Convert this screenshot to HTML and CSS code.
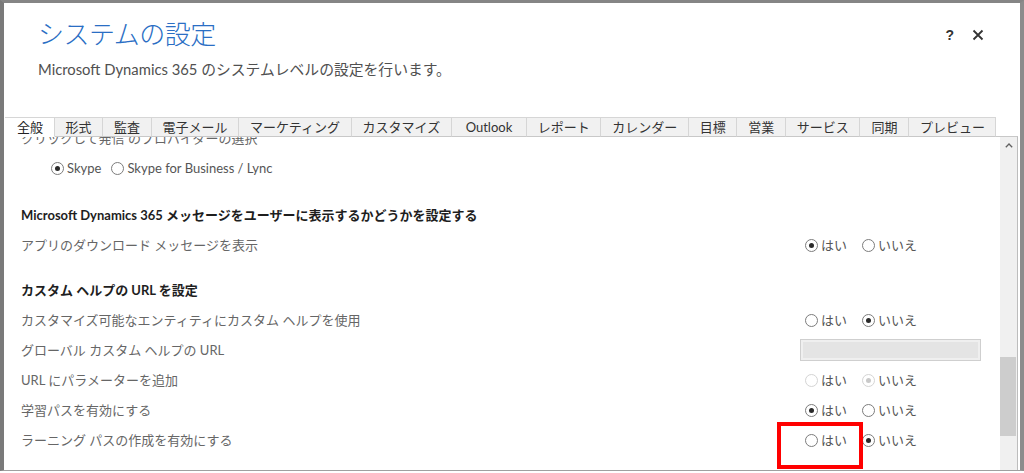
FILE: index.html
```html
<!DOCTYPE html>
<html lang="ja">
<head>
<meta charset="utf-8">
<title>システムの設定</title>
<link rel="stylesheet" href="styles.css">
</head>
<body>
<div class="frame">
  <header class="head">
    <div class="titles">
      <h1 class="title">システムの設定</h1>
      <p class="sub">Microsoft Dynamics 365 のシステムレベルの設定を行います。</p>
    </div>
    <div class="head-actions">
      <span class="help">?</span>
      <svg class="close" viewBox="0 0 12 12" width="12" height="12"><path d="M1.5 1.5 L10.5 10.5 M10.5 1.5 L1.5 10.5" stroke="#333" stroke-width="1.8" fill="none"/></svg>
    </div>
  </header>
  <nav class="tabs">
    <span class="tab active">全般</span>
    <span class="tab">形式</span>
    <span class="tab">監査</span>
    <span class="tab">電子メール</span>
    <span class="tab">マーケティング</span>
    <span class="tab">カスタマイズ</span>
    <span class="tab latin">Outlook</span>
    <span class="tab">レポート</span>
    <span class="tab">カレンダー</span>
    <span class="tab">目標</span>
    <span class="tab">営業</span>
    <span class="tab">サービス</span>
    <span class="tab">同期</span>
    <span class="tab">プレビュー</span>
  </nav>
  <div class="pane">
    <div class="scroll">
      <div class="content">
        <div class="line partial">クリックして発信 のプロバイダーの選択</div>
        <div class="line skype">
          <span class="opt"><span class="radio checked"></span>Skype</span>
          <span class="opt"><span class="radio"></span>Skype for Business / Lync</span>
        </div>
        <section class="sec sec1">
          <div class="line heading">Microsoft Dynamics 365 メッセージをユーザーに表示するかどうかを設定する</div>
          <div class="line row">
            <span class="label">アプリのダウンロード メッセージを表示</span>
            <span class="ctrl"><span class="opt"><span class="radio checked"></span>はい</span><span class="opt"><span class="radio"></span>いいえ</span></span>
          </div>
        </section>
        <section class="sec sec2">
          <div class="line heading">カスタム ヘルプの URL を設定</div>
          <div class="line row">
            <span class="label">カスタマイズ可能なエンティティにカスタム ヘルプを使用</span>
            <span class="ctrl"><span class="opt"><span class="radio"></span>はい</span><span class="opt"><span class="radio checked"></span>いいえ</span></span>
          </div>
          <div class="line row">
            <span class="label">グローバル カスタム ヘルプの URL</span>
            <span class="ctrl"><span class="input"></span></span>
          </div>
          <div class="line row">
            <span class="label">URL にパラメーターを追加</span>
            <span class="ctrl"><span class="opt"><span class="radio disabled"></span>はい</span><span class="opt"><span class="radio disabled checked"></span>いいえ</span></span>
          </div>
          <div class="line row">
            <span class="label">学習パスを有効にする</span>
            <span class="ctrl"><span class="opt"><span class="radio checked"></span>はい</span><span class="opt"><span class="radio"></span>いいえ</span></span>
          </div>
          <div class="line row">
            <span class="label">ラーニング パスの作成を有効にする</span>
            <span class="ctrl"><span class="opt"><span class="radio"></span>はい</span><span class="opt"><span class="radio checked"></span>いいえ</span><span class="highlight"></span></span>
          </div>
        </section>
      </div>
    </div>
    <div class="scrollbar">
      <div class="arrow"><svg viewBox="0 0 8 5" width="8" height="5"><path d="M0.8 4.2 L4 1 L7.2 4.2" stroke="#606060" stroke-width="1.3" fill="none"/></svg></div>
      <div class="thumb"></div>
    </div>
  </div>
</div>
</body>
</html>
```
FILE: styles.css
```css
html, body {
  margin: 0;
  padding: 0;
  background: #ffffff;
}
body {
  font-family: "Lato", "Noto Sans CJK JP", sans-serif;
  width: 1024px;
  height: 473px;
  overflow: hidden;
}
.frame {
  box-sizing: border-box;
  height: 471px;
  border-top: 3px solid #858585;
  border-left: 4px solid #7a7a7a;
  border-right: 4px solid #8c8c8c;
  border-bottom: 1px solid #a0a0a0;
  display: flex;
  flex-direction: column;
  background: #fff;
}
.head {
  height: 114px;
  display: flex;
  justify-content: space-between;
  align-items: flex-start;
  padding: 0 36px 0 34px;
  box-sizing: border-box;
}
.title {
  margin: 14px 0 0 0;
  font-size: 26px;
  line-height: 34px;
  font-weight: 300;
  color: #2a6ec4;
  letter-spacing: -0.5px;
}
.sub {
  margin: 8px 0 0 0;
  font-size: 14.8px;
  line-height: 20px;
  color: #505050;
}
.head-actions {
  display: flex;
  align-items: center;
  gap: 18px;
  margin-top: 25px;
  height: 14px;
}
.help {
  font-family: "Liberation Sans", sans-serif;
  font-weight: bold;
  font-size: 14px;
  color: #333;
}
.close {
  display: block;
}
.tabs {
  display: flex;
  margin-left: 1px;
  height: 20px;
  margin-bottom: -1px;
  position: relative;
  z-index: 1;
}
.tab {
  box-sizing: border-box;
  height: 20px;
  padding: 0 10.5px 0 11px;
  font-size: 13px;
  line-height: 19px;
  color: #333;
  background: #f1f1f1;
  border: 1px solid #d6d6d6;
  border-left: none;
  border-bottom: 1px solid #c8c8c8;
  white-space: nowrap;
}
.tab.latin {
  padding: 0 13.5px 0 14px;
}
.tab.active {
  background: #fff;
  padding-left: 12px;
  border-bottom-color: #fff;
  color: #222;
}
.pane {
  flex: 1;
  display: flex;
  margin-left: 1px;
  margin-right: 2px;
  border-top: 1px solid #c8c8c8;
  border-right: 1px solid #bdbdbd;
  overflow: hidden;
}
.scroll {
  flex: 1;
  overflow: hidden;
}
.content {
  padding-left: 16px;
  font-size: 13px;
  color: #666;
}
.line {
  height: 30px;
  line-height: 30px;
  white-space: nowrap;
}
.partial {
  margin-top: -14px;
  color: #666;
}
.skype {
  padding-left: 30px;
  display: flex;
  gap: 10px;
  color: #555;
}
.sec1 { margin-top: 17px; }
.sec2 { margin-top: 15px; }
.heading {
  font-weight: bold;
  color: #1e1e1e;
}
.row {
  display: grid;
  grid-template-columns: 779px auto;
}
.ctrl {
  display: flex;
  align-items: center;
  position: relative;
  color: #555;
}
.opt {
  display: inline-flex;
  align-items: center;
  height: 30px;
}
.ctrl .opt:first-child {
  margin-left: 5px;
  width: 57px;
}
.radio {
  box-sizing: border-box;
  width: 13px;
  height: 13px;
  border: 1px solid #7c7c7c;
  border-radius: 50%;
  background: #fff;
  margin-right: 3px;
  display: inline-flex;
  align-items: center;
  justify-content: center;
}
.radio.checked::after {
  content: "";
  width: 5px;
  height: 5px;
  border-radius: 50%;
  background: #2a2a2a;
}
.radio.disabled {
  border-color: #d4d4d4;
}
.radio.disabled.checked::after {
  background: #c9c9c9;
}
.input {
  box-sizing: border-box;
  width: 181px;
  height: 22px;
  background: #e4e4e4;
  border: 1px solid #cfcfcf;
  box-shadow: inset 0 0 0 2px #efefef;
}
.highlight {
  position: absolute;
  left: -23px;
  top: -3px;
  width: 86px;
  height: 47px;
  box-sizing: border-box;
  border: 4px solid #ff0000;
}
.scrollbar {
  width: 17px;
  background: #f0f0f0;
  display: flex;
  flex-direction: column;
  align-items: flex-start;
}
.arrow {
  width: 17px;
  height: 17px;
  display: flex;
  align-items: center;
  justify-content: center;
}
.thumb {
  margin-top: 203px;
  width: 16px;
  height: 79px;
  background: #cdcdcd;
}
```
